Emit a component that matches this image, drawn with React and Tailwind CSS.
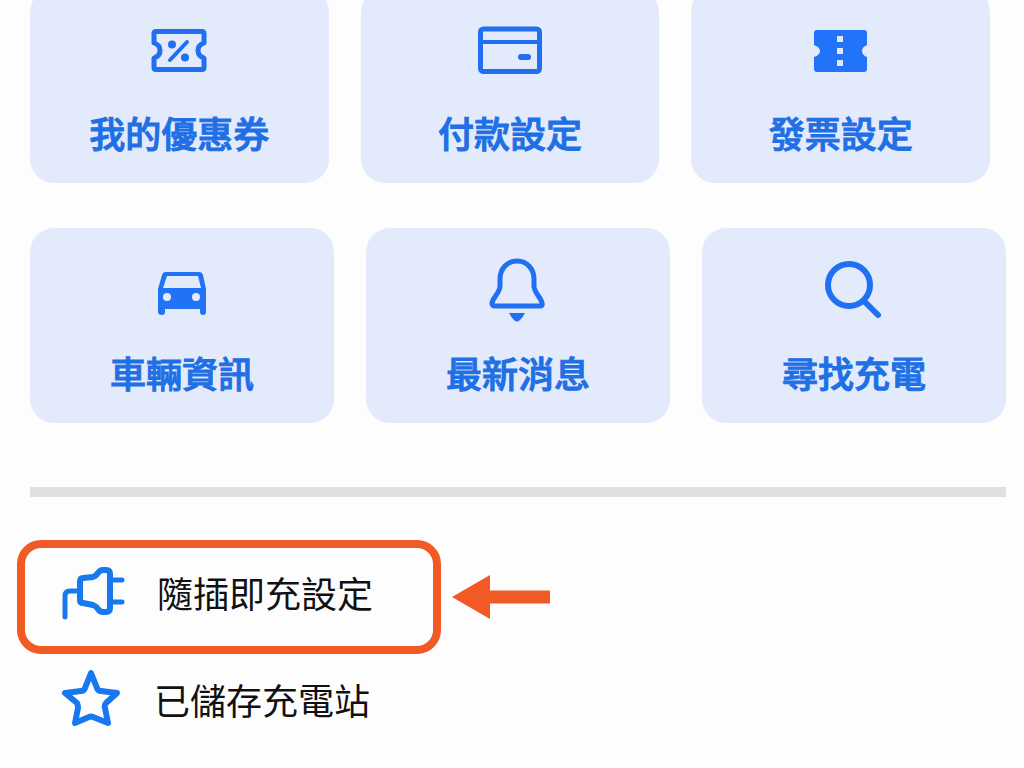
import clsx from "clsx";

const CouponIcon = () => (
    <svg className="size-16" viewBox="0 0 64 64" fill="none" stroke="#1f6ff0" strokeWidth="5" strokeLinejoin="round">
        <path d="M9 13.5H55Q57 13.5 57 15.5V25Q51 27 51 32.5Q51 38 57 40V49.5Q57 51.5 55 51.5H9Q7 51.5 7 49.5V40Q13 38 13 32.5Q13 27 7 25V15.5Q7 13.5 9 13.5Z" />
        <path d="M23 42L40 24" strokeWidth="4" strokeLinecap="round" />
        <circle cx="25" cy="26.5" r="4" fill="#1f6ff0" stroke="none" />
        <circle cx="38" cy="39.5" r="4" fill="#1f6ff0" stroke="none" />
    </svg>
);

const CardIcon = () => (
    <svg className="size-16" viewBox="0 0 64 64" fill="none" stroke="#1f6ff0">
        <rect x="2.5" y="11" width="59" height="42.5" rx="3" strokeWidth="5" />
        <path d="M2 24H62" strokeWidth="4" />
        <path d="M43 39H50" strokeWidth="6" strokeLinecap="round" />
    </svg>
);

const InvoiceIcon = () => (
    <svg className="size-16" viewBox="0 0 64 64">
        <path
            d="M8 12H55Q58 12 58 15V27Q53 29 53 33Q53 37 58 39V51Q58 54 55 54H8Q5 54 5 51V39Q11 37 11 33Q11 29 5 27V15Q5 12 8 12Z"
            fill="#2173fa"
        />
        <path d="M28 18H34V24H28ZM28 30H34V36H28ZM28 42H34V48H28Z" fill="#e3eafb" />
    </svg>
);

const CarIcon = () => (
    <svg className="size-16" viewBox="0 0 64 64">
        <path
            fillRule="evenodd"
            d="M15 14H49Q52 14 53 17L56 31V54Q56 57 53 57Q50 57 50 54V51H15V54Q15 57 12 57Q8 57 8 54V31L12 17Q13 14 15 14ZM17 18L13 30H51L48 18ZM17 35A4 4 0 1 0 17 43A4 4 0 1 0 17 35ZM46 35A4 4 0 1 0 46 43A4 4 0 1 0 46 35Z"
            fill="#2173f5"
        />
    </svg>
);

const BellIcon = () => (
    <svg className="size-16" viewBox="0 0 64 64">
        <path
            d="M31 3C21 3 14 11 14 21V28C14 35 7 39 6 45Q6 48 9 48H54Q57 48 56 45C55 39 48 35 48 28V21C48 11 41 3 31 3Z"
            fill="none"
            stroke="#1f70f2"
            strokeWidth="5"
            strokeLinejoin="round"
        />
        <path d="M23 55H39Q37 59 34 62Q31 65 28 62Q25 59 23 55Z" fill="#1f70f2" />
    </svg>
);

const SearchIcon = () => (
    <svg className="size-16" viewBox="0 0 64 64" fill="none" stroke="#1f70f2">
        <circle cx="27" cy="27" r="21" strokeWidth="6" />
        <path d="M42 43L56 57" strokeWidth="6" strokeLinecap="round" />
    </svg>
);

const PlugIcon = () => (
    <svg className="size-16 shrink-0" viewBox="0 0 64 64" fill="none" stroke="#1878ee" strokeWidth="6" strokeLinecap="round" strokeLinejoin="round">
        <path d="M4 51V30Q4 25 9 25H17" strokeWidth="5" />
        <path d="M19 16Q19 12 22 12L32 11Q35 10 37 7Q39 4 42 4H45Q49 4 49 8V42Q49 46 45 46H42Q39 46 37 43Q35 40 32 39L22 37Q19 37 19 34Z" />
        <path d="M52 14H61M52 36H61" strokeWidth="5" />
    </svg>
);

const StarIcon = () => (
    <svg className="size-16 shrink-0" viewBox="0 0 64 64" fill="none" stroke="#1878f0" strokeWidth="6" strokeLinejoin="round">
        <path d="M30 6L36 21Q37 24 40 24L56 26L45 36Q43 38 44 41L47 56L32 50Q30 49 28 50L14 56L17 41Q17 38 16 36L4 26L20 24Q23 24 24 21Z" />
    </svg>
);

const ArrowIcon = () => (
    <svg className="h-11 w-[98px] shrink-0" viewBox="0 0 98 44">
        <path d="M0 22L38 0V15.5H98V28.5H38V44Z" fill="#f15a24" />
    </svg>
);

const topTiles = [
    { label: "我的優惠券", Icon: CouponIcon },
    { label: "付款設定", Icon: CardIcon },
    { label: "發票設定", Icon: InvoiceIcon },
];

const bottomTiles = [
    { label: "車輛資訊", Icon: CarIcon },
    { label: "最新消息", Icon: BellIcon },
    { label: "尋找充電", Icon: SearchIcon },
];

const TileRow = ({ tiles, className }) => (
    <div className={clsx("grid grid-cols-3 gap-8", className)}>
        {tiles.map(({ label, Icon }) => (
            <button
                key={label}
                type="button"
                className="flex flex-col items-center gap-[26px] rounded-3xl bg-[#e3eafb] pt-[30px] pb-[27px] text-[36px] leading-12 font-medium text-[#1f6fe5] [-webkit-text-stroke:1px_#1f6fe5]"
            >
                <Icon />
                {label}
            </button>
        ))}
    </div>
);

const App = () => {
    return (
        <div className="h-screen overflow-hidden bg-[#fefdfe] font-['Noto_Sans_CJK_TC',sans-serif]">
            <main className="-mt-3 pr-[18px] pl-[30px]">
                <TileRow tiles={topTiles} className="pr-4" />
                <TileRow tiles={bottomTiles} className="mt-[45px]" />

                <hr className="mt-16 h-[10px] border-0 bg-[#e0e0e0]" />

                <ul className="mt-[43px] text-[36px] leading-12 text-[#111111]">
                    <li className="-ml-[13px] flex items-center gap-[11px]">
                        <button
                            type="button"
                            className="flex w-[424px] items-start gap-8 rounded-3xl border-8 border-[#f15a24] pt-[18px] pb-4 pl-9"
                        >
                            <PlugIcon />
                            <span className="pt-0.5">隨插即充設定</span>
                        </button>
                        <ArrowIcon />
                    </li>
                    <li className="mt-[13px] pl-[31px]">
                        <button type="button" className="flex items-center gap-[29px]">
                            <StarIcon />
                            已儲存充電站
                        </button>
                    </li>
                </ul>
            </main>
        </div>
    );
};

export default App;
